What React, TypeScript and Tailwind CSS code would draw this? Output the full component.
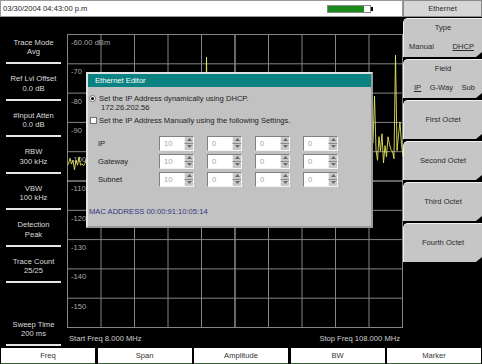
import React from "react";

const leftItems: [string, string][] = [
  ["Trace Mode", "Avg"],
  ["Ref Lvl Offset", "0.0 dB"],
  ["#Input Atten", "0.0 dB"],
  ["RBW", "300 kHz"],
  ["VBW", "100 kHz"],
  ["Detection", "Peak"],
  ["Trace Count", "25/25"],
];

const yLabels = ["-60.00 dBm", "-70", "-80", "-90", "-100", "-110", "-120", "-130", "-140", "-150"];

function tracePoints(): string {
  const pts: string[] = [];
  for (let i = 0; i <= 224; i++) {
    const x = i * 1.5;
    const n = Math.sin(x * 1.91) * 0.6 + Math.sin(x * 0.77 + 2) * 0.4;
    let y = x < 300 ? 129 + n * 7 : 114 + n * 18;
    if (Math.abs(x - 140) < 0.8) y = 23;
    if (Math.abs(x - 307.5) < 0.8) y = 62;
    if (Math.abs(x - 328.5) < 0.8) y = 21;
    if (Math.abs(x - 333) < 0.8) y = 88;
    pts.push(`${x.toFixed(1)},${y.toFixed(1)}`);
  }
  return pts.join(" ");
}

function TopBar() {
  return (
    <div className="flex h-[17px] w-[403px] items-center border border-[#9a9a9a] bg-white pl-[2px] text-[7.6px] leading-[9px] text-[#222]">
      <span>03/30/2004 04:43:00 p.m</span>
      <div className="ml-auto mr-[29px] flex items-center">
        <div className="flex h-[8px] w-[44px] border border-[#8a8a8a] bg-white">
          <div className="h-full w-[36px] bg-[#1a8a1a]" />
        </div>
        <div className="h-[4px] w-[2px] bg-black" />
      </div>
    </div>
  );
}

function LeftPanel() {
  return (
    <div className="flex h-[330px] w-[67px] flex-col px-[6px] pb-[1px] pt-[10.5px] text-[7.6px] leading-[9.5px] text-[#dcdcdc]">
      {leftItems.map(([a, b]) => (
        <div key={a} className="h-[36.5px] border-b-2 border-[#e6e6e6] pt-[10px] text-center">
          <div>{a}</div>
          <div>{b}</div>
        </div>
      ))}
      <div className="mt-auto h-[36.5px] border-b-2 border-[#e6e6e6] pt-[10px] text-center">
        <div>Sweep Time</div>
        <div>200 ms</div>
      </div>
    </div>
  );
}

function Chart() {
  const vx = Array.from({ length: 11 }, (_, i) => 0.5 + i * 33.5);
  const hy = Array.from({ length: 11 }, (_, j) => 0.5 + j * 29.3);
  return (
    <div className="flex w-[336px] flex-col">
      <div className="relative mt-[17px] h-[294px] w-[336px]">
        <div className="flex flex-col text-[7.6px] leading-[9px] text-[#a8a8a8]">
          {yLabels.map((l) => (
            <div key={l} className="h-[29.3px] pl-[4px] pt-[4px]">
              {l}
            </div>
          ))}
        </div>
        <svg className="absolute inset-0" width="336" height="294" viewBox="0 0 336 294">
          {vx.map((x, i) => (
            <line key={"v" + i} x1={x} y1={0} x2={x} y2={294} stroke={i === 5 ? "#d0d0d0" : "#858585"} strokeWidth="1" />
          ))}
          {hy.map((y, j) => (
            <line key={"h" + j} x1={0} y1={y} x2={336} y2={y} stroke={j === 5 ? "#c8c8c8" : "#858585"} strokeWidth="1" />
          ))}
          <polyline points={tracePoints()} fill="none" stroke="#e4e45c" strokeWidth="0.9" />
        </svg>
      </div>
      <div className="mt-[5.5px] flex justify-between pl-[2px] pr-[3px] text-[7.6px] leading-[9px] text-[#d0d0d0]">
        <span>Start Freq 8.000 MHz</span>
        <span>Stop Freq 108.000 MHz</span>
      </div>
    </div>
  );
}

function SoftKey({ children, h = "h-[39px]" }: { children: React.ReactNode; h?: string }) {
  return (
    <div className={`relative ${h} rounded-tl-[5px] border-l border-t border-[#efefef] bg-[#c6c6c6] text-[7.6px] leading-[9px] text-[#2a2a2a]`}>
      {children}
      <div className="absolute bottom-[-5px] right-0 h-0 w-0 border-y-[5px] border-r-[6px] border-y-transparent border-r-black" />
    </div>
  );
}

function RightPanel() {
  return (
    <div className="flex w-[79px] flex-col">
      <div className="flex h-[17px] items-center justify-center border border-[#8a8a8a] bg-[#d6d6d6] text-[7.6px] leading-[9px] text-[#2a2a2a]">
        Ethernet
      </div>
      <div className="mt-[1px] flex flex-col gap-[2px]">
        <SoftKey>
          <div className="flex h-full flex-col">
            <div className="pt-[3.5px] text-center">Type</div>
            <div className="mb-[6.5px] mt-auto flex justify-between pl-[5px] pr-[8px]">
              <span>Manual</span>
              <span className="underline">DHCP</span>
            </div>
          </div>
        </SoftKey>
        <SoftKey>
          <div className="flex h-full flex-col">
            <div className="pt-[3.5px] text-center">Field</div>
            <div className="mb-[6.5px] mt-auto flex justify-between pl-[10px] pr-[7px]">
              <span className="underline">IP</span>
              <span>G-Way</span>
              <span>Sub</span>
            </div>
          </div>
        </SoftKey>
        {["First Octet", "Second Octet", "Third Octet", "Fourth Octet"].map((t) => (
          <SoftKey key={t}>
            <div className="flex h-full items-center justify-center pb-[1px]">{t}</div>
          </SoftKey>
        ))}
      </div>
    </div>
  );
}

function BottomBar() {
  return (
    <div className="flex h-[17px] gap-[2.5px] px-[1px] pt-[1px]">
      {["Freq", "Span", "Amplitude", "BW", "Marker"].map((t) => (
        <div
          key={t}
          className="flex flex-1 items-center justify-center border-b border-[#3c5c3c] bg-white text-[7.6px] leading-[9px] text-[#333]"
        >
          {t}
        </div>
      ))}
    </div>
  );
}

function Spin({ v }: { v: string }) {
  return (
    <div className="flex h-[15px] w-[35px] border border-b-[#f4f4f4] border-l-[#808080] border-r-[#f4f4f4] border-t-[#808080]">
      <div className="flex-1 bg-white pl-[4px] text-[7.6px] leading-[13px] text-[#a6a6a6]">{v}</div>
      <div className="flex w-[9px] flex-col bg-[#c8c8c8]">
        <div className="flex flex-1 items-center justify-center border-b border-l border-b-[#8a8a8a] border-l-[#eeeeee]">
          <svg width="5" height="3" viewBox="0 0 5 3">
            <polygon points="2.5,0 5,3 0,3" fill="#6a6a6a" />
          </svg>
        </div>
        <div className="flex flex-1 items-center justify-center border-l border-l-[#eeeeee]">
          <svg width="5" height="3" viewBox="0 0 5 3">
            <polygon points="0,0 5,0 2.5,3" fill="#6a6a6a" />
          </svg>
        </div>
      </div>
    </div>
  );
}

function Dialog() {
  const rows: [string, string][] = [
    ["IP", "10"],
    ["Gateway", "10"],
    ["Subnet", "10"],
  ];
  return (
    <div className="absolute left-[86px] top-[72px] flex h-[156px] w-[287px] flex-col border-2 border-b-[#9a9a9a] border-l-[#e2e2e2] border-r-[#9a9a9a] border-t-[#e2e2e2] bg-[#c2c2c2] text-[7.6px] leading-[9px] text-[#222]">
      <div className="flex h-[13px] items-center bg-[#0a8282] pl-[7px] text-white">Ethernet Editor</div>
      <div className="flex flex-col pl-[1px]">
        <div className="mt-[6.5px] flex items-center gap-[3px]">
          <div className="flex h-[7px] w-[7px] items-center justify-center rounded-full border border-[#707070] bg-white">
            <div className="h-[3px] w-[3px] rounded-full bg-black" />
          </div>
          <span>Set the IP Address dynamically using DHCP.</span>
        </div>
        <div className="pl-[12px]">172.26.202.56</div>
        <div className="mt-[4.5px] flex items-center gap-[2px] pl-[1px]">
          <div className="h-[7px] w-[7px] border border-[#707070] bg-white" />
          <span>Set the IP Address Manually using the following Settings.</span>
        </div>
        <div className="mt-[10.5px] flex flex-col gap-[3px]">
          {rows.map(([l, v]) => (
            <div key={l} className="flex items-center">
              <div className="w-[70px] pl-[9px]">{l}</div>
              <div className="flex gap-[13px]">
                <Spin v={v} />
                <Spin v="0" />
                <Spin v="0" />
                <Spin v="0" />
              </div>
            </div>
          ))}
        </div>
        <div className="mt-[20.5px] text-[#35357f]">MAC ADDRESS 00:00:91:10:05:14</div>
      </div>
    </div>
  );
}

export default function App() {
  return (
    <div className="relative h-[364px] w-[482px] overflow-hidden bg-black font-['Liberation_Sans',Arial,sans-serif]">
      <div className="flex h-[347px]">
        <div className="flex w-[403px] flex-col">
          <TopBar />
          <div className="flex">
            <LeftPanel />
            <Chart />
          </div>
        </div>
        <RightPanel />
      </div>
      <BottomBar />
      <Dialog />
    </div>
  );
}
